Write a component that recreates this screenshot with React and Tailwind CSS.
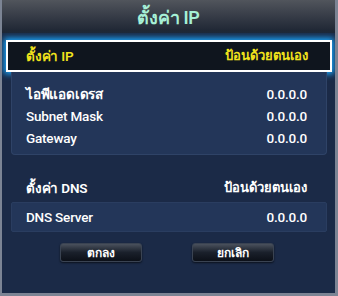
const rows = [
  { label: "ไอพีแอดเดรส", value: "0.0.0.0", thai: true },
  { label: "Subnet Mask", value: "0.0.0.0" },
  { label: "Gateway", value: "0.0.0.0" },
];

const DialogButton = ({ children }) => (
  <button className="w-[82px] h-[19px] rounded-[3px] border border-[#3a4352] bg-gradient-to-b from-[#4a515d] via-[#1a202b] to-[#0c1018] text-white text-[12px] font-semibold leading-none flex items-center justify-center shadow-[0_1px_2px_rgba(0,0,0,0.6)]">
    {children}
  </button>
);

export default function App() {
  return (
    <div className="w-[338px] h-[296px] bg-[#1b2a47] border-l-2 border-r-[3px] border-b-[3px] border-[#7c8494] flex flex-col overflow-hidden font-['Roboto',sans-serif]">
      <div className="h-[33px] shrink-0 bg-gradient-to-b from-[#51555c] to-[#1d2432] flex items-center justify-center">
        <h1 className="text-[18px] font-semibold text-[#a6f0d6] leading-none pt-[2px] tracking-[-0.3px]">ตั้งค่า IP</h1>
      </div>

      <div className="flex flex-col pl-[9px] pr-[8px]">
        <div className="-ml-[5px] -mr-[5px] mt-[7px] h-[32px] border-2 border-white bg-[#0f151e] shadow-[0_0_6px_2px_#1aa8ff] flex items-center justify-between pl-[18px] pr-[22px] text-[13.5px] font-semibold tracking-[-0.2px] text-[#f2e31c]">
          <span className="whitespace-nowrap">ตั้งค่า IP</span>
          <span className="whitespace-nowrap text-[13px] tracking-normal">ป้อนด้วยตนเอง</span>
        </div>

        <div className="h-[83px] bg-[#233659] border border-t-0 border-[#2f4367] rounded-b-[4px] pt-[11px] pl-[14px] pr-[19px]">
          {rows.map((row) => (
            <div key={row.label} className="h-[22px] flex items-center justify-between text-[13.5px] font-medium tracking-[-0.2px] text-white">
              <span className={row.thai ? "whitespace-nowrap font-semibold" : "whitespace-nowrap"}>{row.label}</span>
              <span>{row.value}</span>
            </div>
          ))}
        </div>

        <div className="mt-[22px] h-[22px] flex items-center justify-between pl-[15px] pr-[20px] text-[13.5px] font-semibold tracking-[-0.2px] text-white">
          <span className="whitespace-nowrap">ตั้งค่า DNS</span>
          <span className="whitespace-nowrap text-[13px] tracking-normal">ป้อนด้วยตนเอง</span>
        </div>

        <div className="mt-[3px] h-[30px] bg-[#233659] border border-[#2a3d60] rounded-[2px] flex items-center justify-between pl-[14px] pr-[19px] text-[13.5px] font-medium tracking-[-0.2px] text-white">
          <span>DNS Server</span>
          <span>0.0.0.0</span>
        </div>

        <div className="mt-[11px] flex gap-[50px] pl-[49px]">
          <DialogButton>ตกลง</DialogButton>
          <DialogButton>ยกเลิก</DialogButton>
        </div>
      </div>
    </div>
  );
}
